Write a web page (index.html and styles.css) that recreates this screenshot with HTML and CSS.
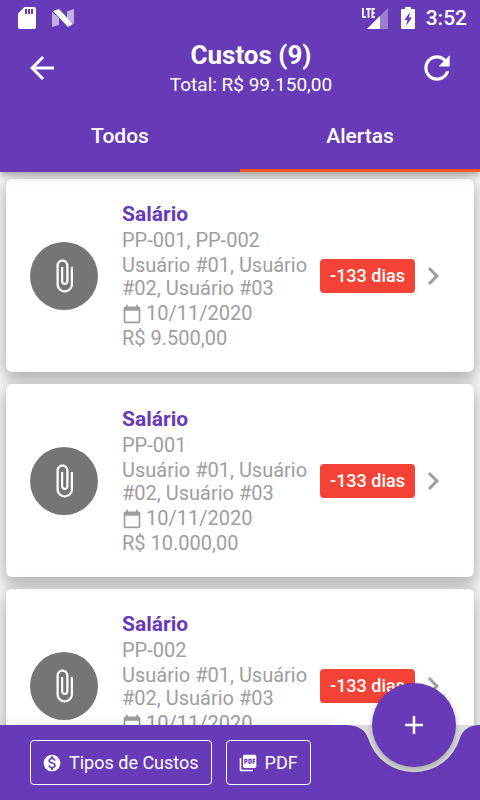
FILE: index.html
```html
<!DOCTYPE html>
<html lang="pt-BR">
<head>
<meta charset="utf-8">
<meta name="viewport" content="width=device-width, initial-scale=1">
<title>Custos</title>
<link rel="stylesheet" href="styles.css">
</head>
<body>
<svg class="defs" aria-hidden="true">
  <symbol id="clip" viewBox="0 0 24 24"><path d="M16.5 6v11.5c0 2.21-1.79 4-4 4s-4-1.79-4-4V5c0-1.38 1.12-2.5 2.5-2.5s2.5 1.12 2.5 2.5v10.5c0 .55-.45 1-1 1s-1-.45-1-1V6H10v9.5c0 1.38 1.12 2.5 2.5 2.5s2.5-1.12 2.5-2.5V5c0-2.21-1.79-4-4-4S7 2.79 7 5v12.5c0 3.04 2.46 5.5 5.5 5.5s5.5-2.46 5.5-5.5V6h-1.5z"/></symbol>
  <symbol id="calendar" viewBox="0 0 24 24"><path d="M20 3h-1V1h-2v2H7V1H5v2H4c-1.1 0-2 .9-2 2v16c0 1.1.9 2 2 2h16c1.1 0 2-.9 2-2V5c0-1.1-.9-2-2-2zm0 18H4V8h16v13z"/></symbol>
  <symbol id="chevron" viewBox="0 0 24 24"><path d="M10 6L8.59 7.41 13.17 12l-4.58 4.59L10 18l6-6z"/></symbol>
</svg>

<header class="appbar">
  <div class="status">
    <svg class="status-sd" viewBox="0 0 18 22"><path fill="#fff" fill-rule="evenodd" d="M6.500 0H16a2 2 0 0 1 2 2v18a2 2 0 0 1-2 2H2a2 2 0 0 1-2-2V6.500zM7 2v5h2V2zm3 0v5h2V2zm3 0v5h2V2z"/></svg>
    <svg class="status-n" viewBox="0 0 22 18"><path fill="#fff" fill-opacity=".6" d="M0 3l7 6v7l-7 2zM22 0v15l-7-6V2.500z"/><path fill="#fff" d="M1 2l6-2 14 15-5 3z"/></svg>
    <span class="grow"></span>
    <svg class="status-lte" viewBox="0 0 26 21"><path fill="#fff" fill-opacity=".35" d="M26 0v21H5z"/><path fill="#fff" d="M18 8v13H5z"/><path fill="none" stroke="#fff" stroke-width="1.800" d="M.9 0v9.200H4M4 .9h5M6.500 .8V10M13 .9h-2.600v8.300H13M10.400 5H12.700"/></svg>
    <svg class="status-battery" viewBox="0 0 14 22"><path fill="#fff" fill-rule="evenodd" d="M4 0h6v2h3a1 1 0 0 1 1 1v18a1 1 0 0 1-1 1H1a1 1 0 0 1-1-1V3a1 1 0 0 1 1-1h3zM9 5L3.500 13H6.500L5 19l6-8.500H8z"/></svg>
    <time class="clock">3:52</time>
  </div>
  <div class="toolbar">
    <button class="icon-btn" aria-label="Voltar"><svg class="back" viewBox="0 0 24 24"><path d="M20 11H7.830l5.590-5.590L12 4l-8 8 8 8 1.410-1.410L7.830 13H20v-2z"/></svg></button>
    <div class="heading">
      <h1>Custos (9)</h1>
      <p>Total: R$ 99.150,00</p>
    </div>
    <button class="icon-btn" aria-label="Atualizar"><svg class="refresh" viewBox="0 0 24 24"><path d="M17.650 6.350C16.200 4.900 14.210 4 12 4c-4.420 0-7.990 3.580-7.990 8s3.570 8 7.990 8c3.730 0 6.840-2.550 7.730-6h-2.080c-.82 2.330-3.040 4-5.650 4-3.310 0-6-2.690-6-6s2.690-6 6-6c1.660 0 3.140.69 4.220 1.780L13 11h7V4l-2.350 2.350z"/></svg></button>
  </div>
  <nav class="tabs">
    <a href="#todos">Todos</a>
    <a href="#alertas" class="active" aria-current="page">Alertas</a>
  </nav>
</header>

<main class="list">
  <article class="card">
    <span class="avatar"><svg><use href="#clip"/></svg></span>
    <div class="info">
      <h2>Salário</h2>
      <p>PP-001, PP-002</p>
      <p>Usuário #01, Usuário #02, Usuário #03</p>
      <p class="date"><svg><use href="#calendar"/></svg>10/11/2020</p>
      <p>R$ 9.500,00</p>
    </div>
    <span class="badge">-133 dias</span>
    <svg class="chevron"><use href="#chevron"/></svg>
  </article>
  <article class="card">
    <span class="avatar"><svg><use href="#clip"/></svg></span>
    <div class="info">
      <h2>Salário</h2>
      <p>PP-001</p>
      <p>Usuário #01, Usuário #02, Usuário #03</p>
      <p class="date"><svg><use href="#calendar"/></svg>10/11/2020</p>
      <p>R$ 10.000,00</p>
    </div>
    <span class="badge">-133 dias</span>
    <svg class="chevron"><use href="#chevron"/></svg>
  </article>
  <article class="card">
    <span class="avatar"><svg><use href="#clip"/></svg></span>
    <div class="info">
      <h2>Salário</h2>
      <p>PP-002</p>
      <p>Usuário #01, Usuário #02, Usuário #03</p>
      <p class="date"><svg><use href="#calendar"/></svg>10/11/2020</p>
    </div>
    <span class="badge">-133 dias</span>
    <svg class="chevron"><use href="#chevron"/></svg>
  </article>
</main>

<footer class="bottombar">
  <div class="actions">
    <button class="outlined"><svg viewBox="0 0 24 24"><path d="M12 2C6.480 2 2 6.480 2 12s4.480 10 10 10 10-4.480 10-10S17.520 2 12 2zm1.410 16.090V20h-2.670v-1.930c-1.710-.36-3.160-1.460-3.270-3.400h1.960c.1 1.050.82 1.870 2.650 1.870 1.960 0 2.400-.98 2.400-1.590 0-.83-.44-1.610-2.670-2.140-2.480-.6-4.180-1.620-4.180-3.670 0-1.720 1.390-2.840 3.110-3.210V4h2.670v1.950c1.860.45 2.790 1.860 2.850 3.390H14.300c-.05-1.110-.64-1.870-2.220-1.870-1.500 0-2.400.68-2.400 1.640 0 .84.65 1.390 2.670 1.910s4.180 1.390 4.180 3.910c-.01 1.830-1.380 2.830-3.120 3.160z"/></svg>Tipos de Custos</button>
    <button class="outlined"><svg viewBox="0 0 24 24"><path d="M20 2H8c-1.100 0-2 .9-2 2v12c0 1.100.9 2 2 2h12c1.100 0 2-.9 2-2V4c0-1.100-.9-2-2-2zm-8.500 7.500c0 .83-.67 1.500-1.500 1.500H9v2H7.500V7H10c.83 0 1.500.67 1.500 1.500v1zm5 2c0 .83-.67 1.500-1.500 1.500h-2.500V7H15c.83 0 1.500.67 1.500 1.500v3zm4-3H19v1h1.500V11H19v2h-1.500V7h3v1.500zM9 9.500h1v-1H9v1zM4 6H2v14c0 1.100.9 2 2 2h14v-2H4V6zm10 5.500h1v-3h-1v3z"/></svg>PDF</button>
  </div>
  <div class="dock">
    <svg class="notch" viewBox="0 0 140 75"><path d="M0 0H6C18 0 25 5 28 13A48 48 0 0 0 120 13C123 4 130 0 140 0V75H0z"/></svg>
    <button class="fab" aria-label="Adicionar"><svg viewBox="0 0 14 14"><path d="M6 0h2v6h6v2H8v6H6V8H0V6h6z"/></svg></button>
  </div>
</footer>
</body>
</html>
```
FILE: styles.css
```css
:root {
  --primary: #673ab7;
  --accent: #ff5722;
  --grey: #9e9e9e;
}

* {
  box-sizing: border-box;
}

body {
  margin: 0;
  height: 100vh;
  display: flex;
  flex-direction: column;
  overflow: hidden;
  background: #fafafa;
  font-family: Roboto, sans-serif;
}

h1, h2, p {
  margin: 0;
}

button {
  font: inherit;
  color: inherit;
  background: none;
  border: 0;
  padding: 0;
  cursor: pointer;
}

svg {
  display: block;
  flex: none;
  fill: currentColor;
}

.defs {
  position: absolute;
  width: 0;
  height: 0;
}

.appbar {
  position: relative;
  z-index: 2;
  flex: none;
  background: var(--primary);
  color: #fff;
  box-shadow: 0 3px 6px rgba(0, 0, 0, .25), 0 2px 12px rgba(0, 0, 0, .15);
}

.status {
  display: flex;
  align-items: center;
  height: 36px;
  padding: 0 13px 0 18px;
}

.status-sd { width: 18px; height: 22px; }
.status-n { width: 22px; height: 18px; margin-left: 16px; }
.status-lte { width: 26px; height: 21px; }
.status-battery { width: 14px; height: 22px; margin: 0 11px 0 13px; }
.grow { flex: 1; }

.clock {
  font-size: 21px;
  font-weight: 500;
}

.toolbar {
  display: flex;
  align-items: center;
  height: 64px;
  padding: 0 24px;
}

.icon-btn {
  display: grid;
  place-items: center;
  width: 38px;
  height: 38px;
}

.icon-btn:first-child {
  width: 36px;
}

.back { width: 36px; height: 36px; }
.refresh { width: 38px; height: 38px; }

.heading {
  flex: 1;
  padding: 2px 0 0 24px;
  text-align: center;
}

.heading h1 {
  font-size: 26px;
  line-height: 32px;
  font-weight: 700;
}

.heading p {
  font-size: 19px;
  line-height: 28px;
}

.tabs {
  display: flex;
  height: 72px;
}

.tabs a {
  flex: 1;
  display: grid;
  place-items: center;
  border-top: 3px solid transparent;
  border-bottom: 3px solid transparent;
  color: #fff;
  font-size: 21px;
  font-weight: 500;
  text-decoration: none;
}

.tabs .active {
  border-bottom-color: var(--accent);
}

.list {
  flex: 1;
  min-height: 0;
  overflow: hidden;
  display: flex;
  flex-direction: column;
  gap: 12px;
  padding: 7px 6px 0;
}

.card {
  flex: none;
  display: flex;
  align-items: center;
  min-height: 193px;
  padding: 22px 23px 22px 24px;
  border-radius: 6px;
  background: #fff;
  box-shadow: 0 6px 14px 2px rgba(0, 0, 0, .2), 0 4px 20px 2px rgba(0, 0, 0, .12);
}

.avatar {
  flex: none;
  display: grid;
  place-items: center;
  width: 68px;
  height: 68px;
  margin-right: 24px;
  border-radius: 50%;
  background: #757575;
  color: #fff;
}

.avatar svg,
.chevron {
  width: 36px;
  height: 36px;
}

.info {
  flex: 1;
  min-width: 0;
  align-self: flex-start;
  display: grid;
  gap: 2px;
  padding-right: 6px;
  color: var(--grey);
  font-size: 20px;
  line-height: 23px;
}

.info h2 {
  color: var(--primary);
  font-size: 21px;
  line-height: 26px;
  font-weight: 700;
}

.date {
  display: flex;
  align-items: center;
  gap: 4px;
}

.date svg {
  width: 20px;
  height: 20px;
}

.badge {
  flex: none;
  padding: 0 10px;
  border-radius: 4px;
  background: #f44336;
  color: #fff;
  font-size: 18px;
  line-height: 34px;
  font-weight: 500;
}

.chevron {
  color: var(--grey);
}

.bottombar {
  position: relative;
  z-index: 1;
  flex: none;
  display: flex;
  height: 75px;
  color: #fff;
}

.actions {
  flex: 1;
  display: flex;
  align-items: center;
  gap: 14px;
  padding-left: 30px;
  background: var(--primary);
  box-shadow: 0 0 12px rgba(0, 0, 0, .1);
}

.outlined {
  display: flex;
  align-items: center;
  gap: 7px;
  height: 45px;
  padding: 0 12px 0 11px;
  border: 1px solid #fff;
  border-radius: 4px;
  font-size: 18px;
  white-space: nowrap;
}

.outlined svg {
  width: 20px;
  height: 20px;
}

.dock {
  position: relative;
  flex: none;
  width: 140px;
  background: #dcdcdc;
}

.notch {
  position: relative;
  width: 140px;
  height: 75px;
  color: var(--primary);
}

.fab {
  position: absolute;
  top: -42px;
  left: 32px;
  display: grid;
  place-items: center;
  width: 84px;
  height: 84px;
  border-radius: 50%;
  background: var(--primary);
  box-shadow: 0 3px 6px rgba(0, 0, 0, .25);
}

.fab svg {
  width: 18px;
  height: 18px;
}
```
